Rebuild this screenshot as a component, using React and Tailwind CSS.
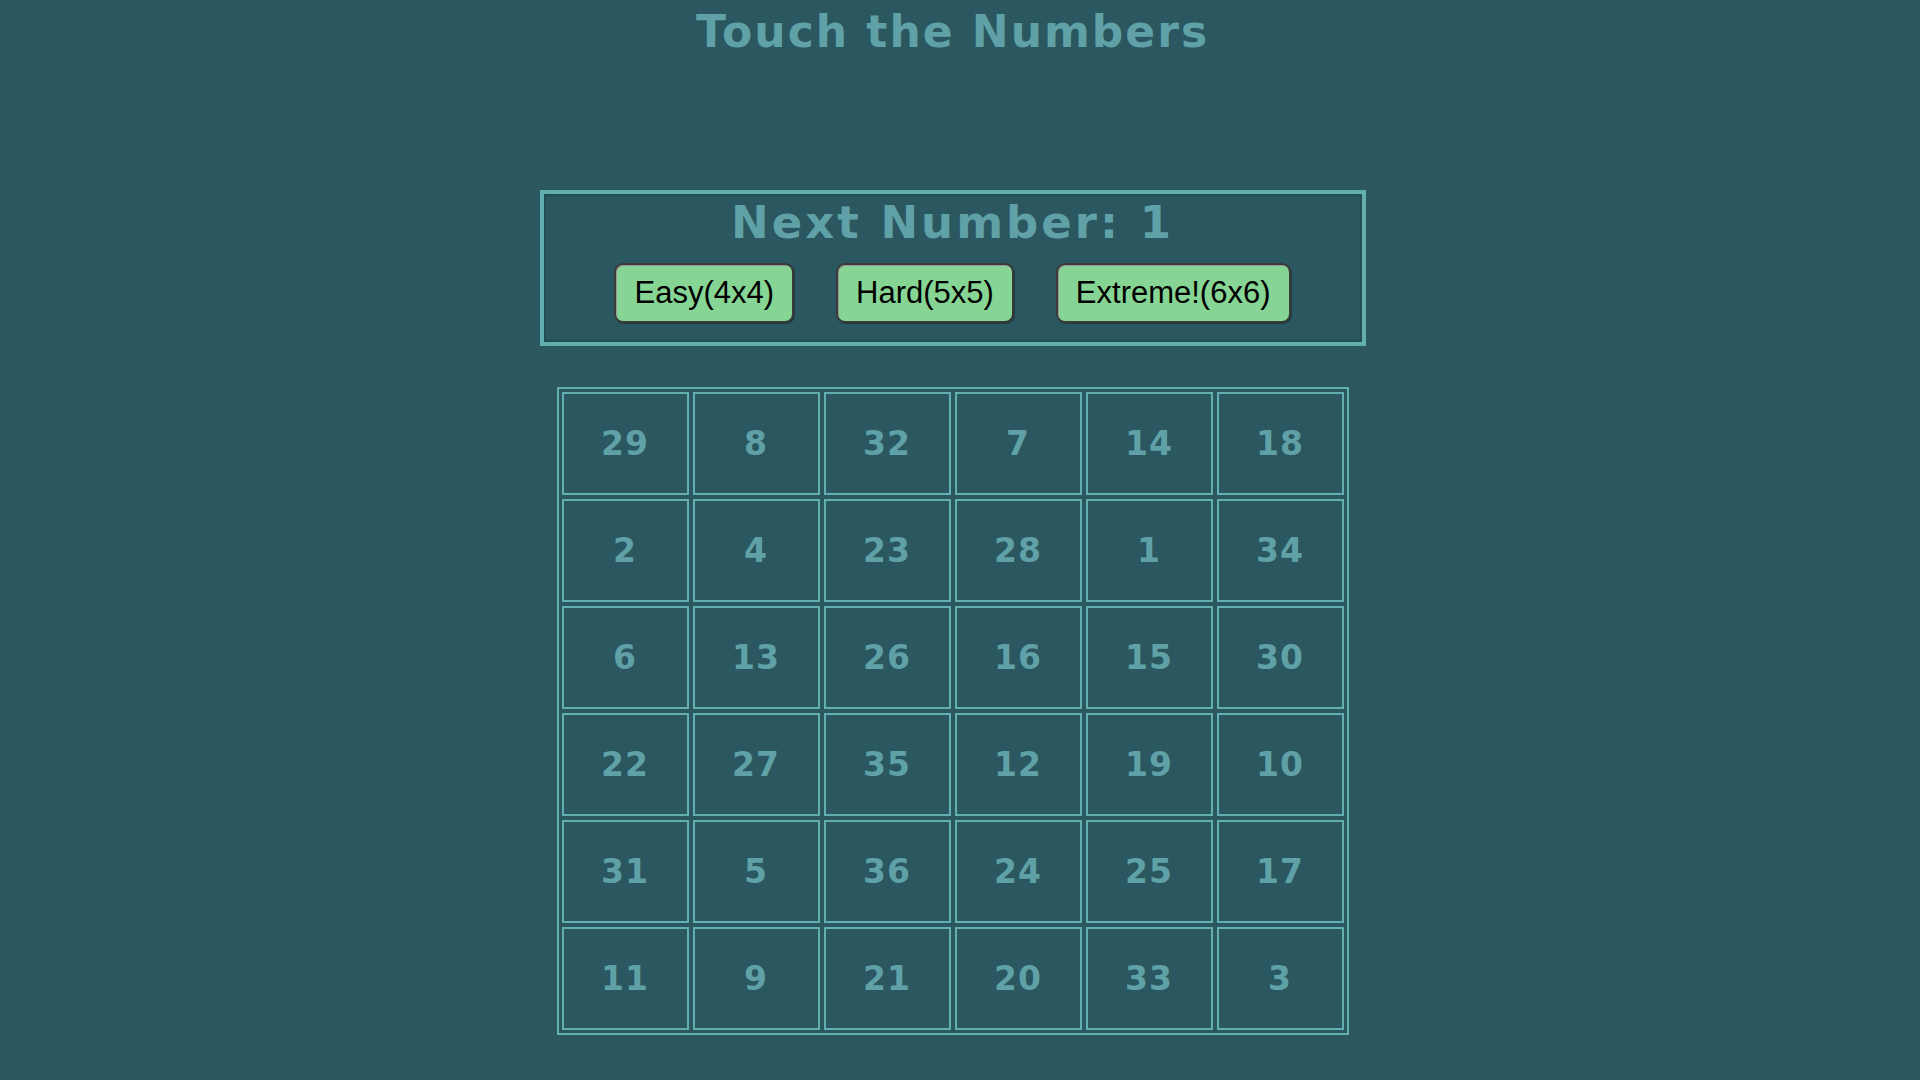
import { useState } from "react";

const BOARD = [
  [29, 8, 32, 7, 14, 18],
  [2, 4, 23, 28, 1, 34],
  [6, 13, 26, 16, 15, 30],
  [22, 27, 35, 12, 19, 10],
  [31, 5, 36, 24, 25, 17],
  [11, 9, 21, 20, 33, 3],
];

const LEVELS = ["Easy(4x4)", "Hard(5x5)", "Extreme!(6x6)"];

const App = () => {
  const [next] = useState(1);

  return (
    <div className="min-h-screen w-full bg-[#2b5760] pr-[15px] font-['DejaVu_Sans',sans-serif]">
      <div className="flex flex-col items-center">
        {/* Title */}
        <h1 className="mt-[10px] text-[44px] leading-none font-bold tracking-[2px] text-[#5fa1a6]">
          Touch the Numbers
        </h1>

        {/* Control panel */}
        <div className="mt-[136px] w-[826px] border-4 border-[#63aeae] shadow-[inset_0_0_0_2px_#244c53] flex flex-col items-center pt-[6px] pb-[19px]">
          <div className="text-[45px] leading-none font-bold tracking-[3px] text-[#5fa1a6]">
            Next Number: {next}
          </div>
          <div className="mt-[18px] flex gap-[42px]">
            {LEVELS.map((label) => (
              <button
                key={label}
                className="h-[60px] px-[18px] rounded-[9px] border-2 border-[#3a3a3a] bg-[#86d594] text-black text-[31px] font-['Liberation_Sans',sans-serif] shadow-[inset_1px_1px_0_#9a9a9a,1px_1px_0_#1e3a40]"
              >
                {label}
              </button>
            ))}
          </div>
        </div>

        {/* Number board */}
        <div className="mt-[41px] border-2 border-[#63aeae] px-[3px] py-[3px]">
          <div className="grid grid-cols-6 gap-[4px]">
            {BOARD.flat().map((n) => (
              <div
                key={n}
                className="w-[127px] h-[103px] border-2 border-[#63aeae] flex items-center justify-center text-[33px] font-bold tracking-[1px] text-[#5fa1a6]"
              >
                {n}
              </div>
            ))}
          </div>
        </div>
      </div>
    </div>
  );
};

export default App;
